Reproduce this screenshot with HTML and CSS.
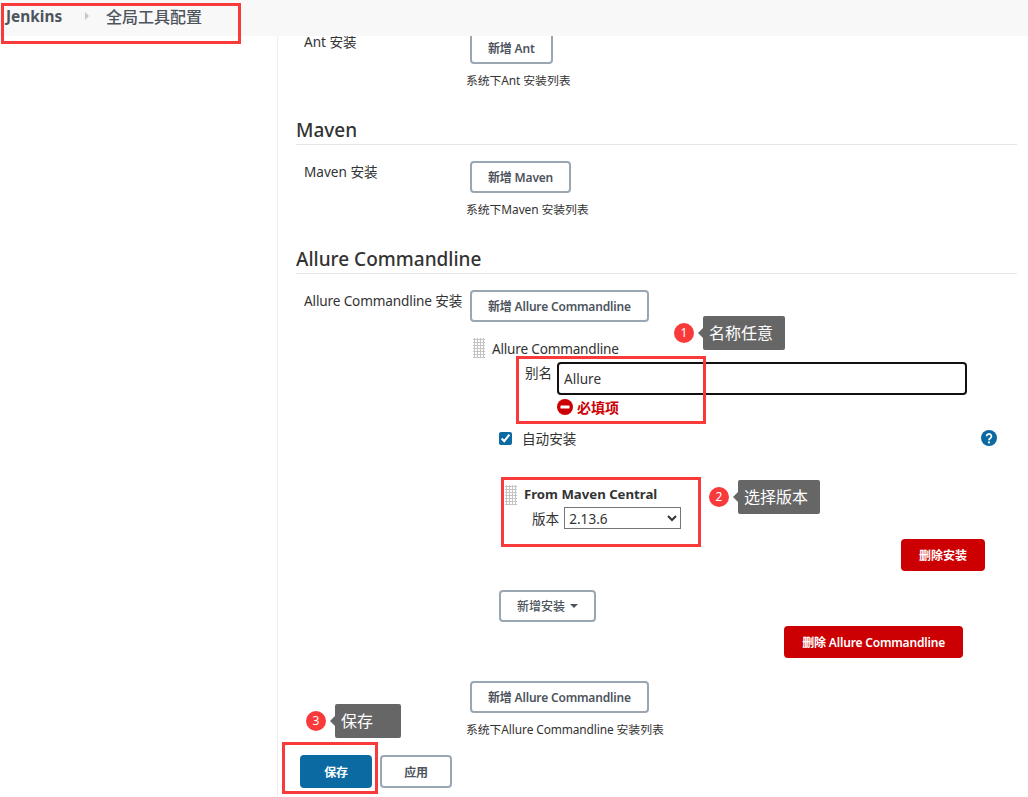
FILE: index.html
```html
<!DOCTYPE html>
<html lang="zh">
<head>
<meta charset="utf-8">
<title>全局工具配置</title>
<link rel="stylesheet" href="styles.css">
</head>
<body>
<div class="page">
  <header class="topbar">
    <span class="crumb-root">Jenkins</span>
    <span class="crumb-sep"></span>
    <span class="crumb-page">全局工具配置</span>
  </header>
  <div class="layout">
    <aside class="side"></aside>
    <main class="content">
      <div class="tool-row ant-row">
        <div class="tool-label">Ant 安装</div>
        <div class="tool-control">
          <button class="btn">新增 Ant</button>
          <div class="hint">系统下Ant 安装列表</div>
        </div>
      </div>
      <h2 class="section-title maven-title">Maven</h2>
      <div class="tool-row">
        <div class="tool-label">Maven 安装</div>
        <div class="tool-control">
          <button class="btn">新增 Maven</button>
          <div class="hint">系统下Maven 安装列表</div>
        </div>
      </div>
      <h2 class="section-title allure-title">Allure Commandline</h2>
      <div class="tool-row">
        <div class="tool-label allure-label">Allure Commandline 安装</div>
        <div class="tool-control">
          <button class="btn">新增 Allure Commandline</button>
          <section class="repeat">
            <div class="repeat-head">
              <span class="grip"></span>
              <span>Allure Commandline</span>
            </div>
            <div class="alias-row">
              <label class="alias-label">别名</label>
              <div class="alias-field">
                <input class="alias-input" type="text" value="Allure">
                <div class="error">
                  <svg class="error-icon" viewBox="0 0 16 16"><circle cx="8" cy="8" r="8" fill="#cc0003"/><rect x="3.5" y="6.5" width="9" height="3" rx="0.5" fill="#fff"/></svg>
                  <span>必填项</span>
                </div>
              </div>
            </div>
            <div class="auto-row">
              <input class="auto-check" type="checkbox" checked>
              <span class="auto-label">自动安装</span>
              <svg class="help" viewBox="0 0 16 16"><circle cx="8" cy="8" r="8" fill="#0b6aa2"/><path d="M5.6 6.2a2.4 2.3 0 1 1 3.7 2c-.9.6-1.3 1-1.3 2" fill="none" stroke="#fff" stroke-width="1.8"/><circle cx="8" cy="12.4" r="1.1" fill="#fff"/></svg>
            </div>
            <div class="installer">
              <span class="grip"></span>
              <div class="installer-body">
                <div class="installer-title">From Maven Central</div>
                <div class="version-row">
                  <label>版本</label>
                  <select class="version"><option>2.13.6</option></select>
                </div>
              </div>
            </div>
            <div class="end-row del-install"><button class="btn danger">删除安装</button></div>
            <button class="btn add-install">新增安装<span class="caret"></span></button>
            <div class="end-row del-tool"><button class="btn danger">删除 Allure Commandline</button></div>
          </section>
          <button class="btn">新增 Allure Commandline</button>
          <div class="hint">系统下Allure Commandline 安装列表</div>
        </div>
      </div>
      <div class="actions">
        <button class="btn primary">保存</button>
        <button class="btn">应用</button>
      </div>
    </main>
  </div>

  <div class="mark mark-crumb"></div>
  <div class="mark mark-alias"></div>
  <div class="mark mark-version"></div>
  <div class="mark mark-save"></div>

  <div class="note note-1"><span class="dot">1</span><span class="tip">名称任意</span></div>
  <div class="note note-2"><span class="dot">2</span><span class="tip">选择版本</span></div>
  <div class="note note-3"><span class="dot">3</span><span class="tip">保存</span></div>
</div>
</body>
</html>
```
FILE: styles.css
```css
* { box-sizing: border-box; }
html, body { margin: 0; padding: 0; height: 100%; overflow: hidden; background: #fff; }
body {
  font-family: "Noto Sans", "Noto Sans CJK SC", sans-serif;
  font-size: 13.6px;
  color: #333;
}
.page { position: relative; width: 1028px; height: 797px; overflow: hidden; }

.topbar {
  position: relative;
  z-index: 2;
  display: flex;
  align-items: center;
  height: 36px;
  padding: 0 0 5px 6px;
  background: #f8f8f8;
  color: #4d545d;
}
.crumb-root { font-size: 15.4px; font-weight: 700; width: 79px; padding-top: 2px; }
.crumb-sep {
  width: 0; height: 0;
  border-left: 4px solid #c4c8cc;
  border-top: 4px solid transparent;
  border-bottom: 4px solid transparent;
  margin-right: 17px;
}
.crumb-page { font-size: 16px; font-weight: 500; }

.layout { display: flex; margin-top: -36px; height: 797px; }
.side { width: 278px; flex: none; border-right: 1px solid #eee; }
.content { flex: 1; padding: 32px 11px 0 18px; min-width: 0; }

.tool-row { display: flex; padding-left: 8px; }
.tool-label { width: 162px; flex: none; padding-top: 2px; line-height: 18px; white-space: nowrap; }
.allure-label { letter-spacing: -0.14px; }
.tool-control { flex: 1; min-width: 0; }
.ant-row .tool-label { padding-top: 1px; }

.btn {
  display: inline-block;
  height: 32px;
  margin-left: 4px;
  padding: 0 16px;
  border: 2px solid #9aa7b3;
  border-radius: 4px;
  background: #fff;
  color: #4d545d;
  font: 600 12px "Noto Sans", "Noto Sans CJK SC", sans-serif;
  letter-spacing: -0.18px;
}
.hint { margin-top: 8px; font-size: 11.9px; line-height: 17px; letter-spacing: -0.1px; }

.section-title {
  margin: 0;
  border-bottom: 1px solid #e5e5e5;
  font-size: 19px;
  font-weight: 500;
  line-height: 25px;
  height: 27px;
  color: #333;
}
.maven-title { margin-top: 29px; margin-bottom: 16px; }
.allure-title { margin-top: 29px; margin-bottom: 16px; }

.repeat { margin-left: 4px; padding-top: 16px; position: relative; }
.grip {
  display: block;
  width: 12px;
  height: 20px;
  flex: none;
  background-image: radial-gradient(#c4c4c4 1px, transparent 1.1px);
  background-size: 3px 3px;
}
.repeat-head { display: flex; gap: 7px; margin-left: 3px; height: 24px; line-height: 20px; letter-spacing: -0.2px; }
.repeat-head span:last-child { padding-top: 1px; }

.alias-row { display: flex; margin-left: 55px; }
.alias-label { width: 32px; padding-top: 1px; line-height: 20px; }
.alias-input {
  display: block;
  width: 410px;
  height: 33px;
  padding: 0 5px;
  border: 2px solid #111;
  border-radius: 4px;
  font: 13.6px "Noto Sans", sans-serif;
  color: #333;
  outline: none;
}
.error { display: flex; align-items: center; gap: 4px; margin-top: 3px; height: 18px; color: #cc0003; font-weight: 700; font-size: 14px; }
.error-icon { width: 16px; height: 16px; }

.auto-row { display: flex; align-items: center; height: 20px; margin-top: 12px; margin-left: 29px; position: relative; }
.auto-check { width: 13px; height: 13px; margin: 0 10px 0 0; accent-color: #0b6aa2; }
.help { position: absolute; left: 482px; top: 2px; width: 16px; height: 16px; }

.installer { display: flex; gap: 7px; margin: 37px 0 0 35px; }
.installer-title { font-weight: 700; font-size: 13.2px; line-height: 18px; color: #333; }
.version-row { display: flex; align-items: center; gap: 5px; margin: 4px 0 1px 8px; }
.version { width: 117px; height: 22px; font: 13.6px "Noto Sans", sans-serif; color: #333; background: #fff; border: 1px solid #767676; border-radius: 0; }

.end-row { display: flex; justify-content: flex-end; }
.del-install { width: 515px; margin-top: 9px; }
.del-install .btn { letter-spacing: 0; }
.del-tool { width: 493px; margin-top: 4px; margin-bottom: 23px; }
.add-install { display: flex; align-items: center; gap: 5px; margin: 19px 0 0 29px; font-weight: 500; letter-spacing: 0; }
.caret { width: 0; height: 0; border-top: 4px solid #4d545d; border-left: 4px solid transparent; border-right: 4px solid transparent; }
.danger { background: #cc0003; border-color: #cc0003; color: #fff; margin-left: 0; }

.actions { display: flex; gap: 8px; margin: 17px 0 0 4px; }
.actions .btn { width: 72px; height: 33px; margin: 0; padding: 0; }
.primary { background: #0b6aa2; border-color: #0b6aa2; color: #fff; }

.mark { position: absolute; z-index: 3; border: 3px solid #f93a3a; }
.mark-crumb { left: 1px; top: 3px; width: 240px; height: 41px; }
.mark-alias { left: 516px; top: 356px; width: 190px; height: 68px; }
.mark-version { left: 501px; top: 477px; width: 200px; height: 70px; }
.mark-save { left: 282px; top: 742px; width: 96px; height: 52px; }

.note { position: absolute; z-index: 3; display: flex; align-items: center; gap: 9px; height: 34px; }
.note-1 { left: 674px; top: 316px; }
.note-2 { left: 709px; top: 480px; }
.note-3 { left: 306px; top: 704px; }
.dot {
  width: 20px; height: 20px;
  border-radius: 50%;
  background: #f93a3a;
  color: #fff;
  font-size: 12px;
  line-height: 20px;
  text-align: center;
}
.tip {
  position: relative;
  width: 82px;
  height: 34px;
  padding: 0 6px;
  border-radius: 2px;
  background: #666;
  color: #fff;
  font-size: 16px;
  line-height: 34px;
}
.note-3 .tip { width: 66px; }
.tip::before {
  content: "";
  position: absolute;
  left: -5px; top: 12px;
  border-right: 5px solid #666;
  border-top: 5px solid transparent;
  border-bottom: 5px solid transparent;
}
```
